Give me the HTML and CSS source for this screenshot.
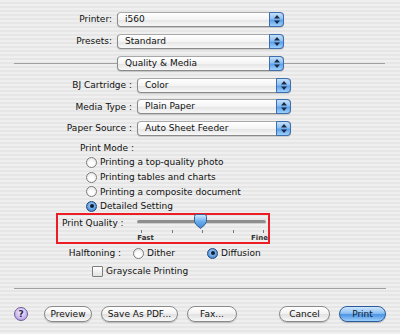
FILE: index.html
```html
<!DOCTYPE html>
<html lang="en">
<head>
    <meta charset="UTF-8">
    <title>Print</title>
    <link rel="stylesheet" href="styles.css">
</head>
<body>
    <div class="dialog">
        <div class="row top">
            <span class="label">Printer:</span>
            <div class="popup wide">i560<span class="cap"><svg width="6" height="9" viewBox="0 0 6 9"><path d="M3 0L6 3.5H0Z M3 9L6 5.5H0Z" fill="#1b2a45"/></svg></span></div>
        </div>
        <div class="row top">
            <span class="label">Presets:</span>
            <div class="popup wide">Standard<span class="cap"><svg width="6" height="9" viewBox="0 0 6 9"><path d="M3 0L6 3.5H0Z M3 9L6 5.5H0Z" fill="#1b2a45"/></svg></span></div>
        </div>
        <div class="row pane">
            <span class="rule left"></span>
            <div class="popup wide">Quality &amp; Media<span class="cap"><svg width="6" height="9" viewBox="0 0 6 9"><path d="M3 0L6 3.5H0Z M3 9L6 5.5H0Z" fill="#1b2a45"/></svg></span></div>
            <span class="rule right"></span>
        </div>

        <div class="row mid first">
            <span class="label">BJ Cartridge :</span>
            <div class="popup">Color<span class="cap"><svg width="6" height="9" viewBox="0 0 6 9"><path d="M3 0L6 3.5H0Z M3 9L6 5.5H0Z" fill="#1b2a45"/></svg></span></div>
        </div>
        <div class="row mid">
            <span class="label">Media Type :</span>
            <div class="popup">Plain Paper<span class="cap"><svg width="6" height="9" viewBox="0 0 6 9"><path d="M3 0L6 3.5H0Z M3 9L6 5.5H0Z" fill="#1b2a45"/></svg></span></div>
        </div>
        <div class="row mid">
            <span class="label">Paper Source :</span>
            <div class="popup">Auto Sheet Feeder<span class="cap"><svg width="6" height="9" viewBox="0 0 6 9"><path d="M3 0L6 3.5H0Z M3 9L6 5.5H0Z" fill="#1b2a45"/></svg></span></div>
        </div>

        <div class="mode">
            <div class="mode-title">Print Mode :</div>
            <div class="radios">
                <div class="option"><span class="radio"></span>Printing a top-quality photo</div>
                <div class="option"><span class="radio"></span>Printing tables and charts</div>
                <div class="option"><span class="radio"></span>Printing a composite document</div>
                <div class="option"><span class="radio on"></span>Detailed Setting</div>
            </div>
        </div>

        <div class="quality">
            <span class="q-label">Print Quality :</span>
            <div class="slider">
                <div class="track"></div>
                <svg class="thumb" width="13" height="15" viewBox="0 0 13 15">
                    <defs>
                        <linearGradient id="tg" x1="0" y1="0" x2="0" y2="1">
                            <stop offset="0" stop-color="#d6ecff"/>
                            <stop offset="0.5" stop-color="#6aaef0"/>
                            <stop offset="1" stop-color="#3d86d8"/>
                        </linearGradient>
                    </defs>
                    <path d="M2.5 0.5H10.5Q12.5 0.5 12.5 2.5V7.5Q12.5 10 6.5 14.5Q0.5 10 0.5 7.5V2.5Q0.5 0.5 2.5 0.5Z" fill="url(#tg)" stroke="#3a5f8f"/>
                </svg>
                <div class="ticks">
                    <span></span><span></span><span></span><span></span><span></span>
                </div>
                <div class="ends"><span>Fast</span><span>Fine</span></div>
            </div>
        </div>

        <div class="halftone">
            <span class="h-label">Halftoning :</span>
            <div class="option"><span class="radio"></span>Dither</div>
            <div class="option diffusion"><span class="radio on"></span>Diffusion</div>
        </div>
        <div class="gray">
            <span class="check"></span>Grayscale Printing
        </div>

        <div class="bottom-rule"></div>

        <div class="buttons">
            <span class="help">?</span>
            <span class="btn preview">Preview</span>
            <span class="btn pdf">Save As PDF...</span>
            <span class="btn fax">Fax...</span>
            <span class="spacer"></span>
            <span class="btn cancel">Cancel</span>
            <span class="btn print">Print</span>
        </div>
    </div>
</body>
</html>
```

FILE: styles.css
```css
body {
    margin: 0;
    width: 400px;
    height: 334px;
    overflow: hidden;
    font-family: "DejaVu Sans", Verdana, sans-serif;
    font-size: 9px;
    color: #111;
    background-color: #ececec;
    background-image: repeating-linear-gradient(to bottom, #efefef 0, #efefef 2px, #e6e6e6 2px, #e6e6e6 4px);
}
.dialog {
    padding-top: 8px;
}
.row {
    display: flex;
    align-items: center;
    height: 22px;
}
.row.mid {
    height: 21.5px;
}
.label {
    text-align: right;
    padding-right: 5px;
    box-sizing: border-box;
}
.top .label {
    width: 117px;
}
.mid .label {
    width: 137px;
}
.mid.first {
    margin-top: 0.5px;
}
.popup {
    position: relative;
    box-sizing: border-box;
    width: 154px;
    height: 15px;
    line-height: 13px;
    padding-left: 7px;
    border: 1px solid #8a8a8a;
    border-top-color: #a8a8a8;
    border-radius: 4px;
    background: linear-gradient(to bottom, #ffffff 0%, #f4f4f4 50%, #e4e4e4 51%, #f8f8f8 100%);
    box-shadow: 0 1px 1px rgba(0,0,0,0.15);
}
.popup.wide {
    width: 167px;
}
.cap {
    position: absolute;
    right: -1px;
    top: -1px;
    width: 15px;
    height: 15px;
    border: 1px solid #3d6fae;
    border-radius: 0 4px 4px 0;
    box-sizing: border-box;
    background: linear-gradient(to bottom, #c5e0fb 0%, #8dc0f2 45%, #5ba0ea 55%, #9fd0fb 100%);
    display: flex;
    align-items: center;
    justify-content: center;
}
.rule {
    height: 1px;
    background: #a0a0a0;
}
.rule.left {
    margin-left: 14px;
    width: 103px;
}
.rule.right {
    width: 101px;
}
.mode {
    padding-left: 80px;
    margin-top: 2px;
}
.mode-title {
    height: 14px;
    line-height: 14px;
}
.radios {
    padding-left: 6px;
}
.option {
    display: flex;
    align-items: center;
    height: 14.7px;
}
.radio {
    width: 9px;
    height: 9px;
    border: 1px solid #7d7d7d;
    border-radius: 50%;
    margin-right: 3px;
    background: radial-gradient(circle at 50% 65%, #ffffff 30%, #dcdcdc 100%);
    position: relative;
}
.radio.on {
    border-color: #24487a;
    background: radial-gradient(circle at 50% 40%, #b8daf8 0%, #5b9be0 60%, #2e6fc0 100%);
}
.radio.on::after {
    content: "";
    position: absolute;
    left: 2.5px;
    top: 2.5px;
    width: 4px;
    height: 4px;
    border-radius: 50%;
    background: #0d1d33;
}
.quality {
    display: flex;
    margin: -1px 0 0 56px;
    width: 214px;
    height: 31px;
    box-sizing: border-box;
    border: 2px solid #ec1c24;
}
.q-label {
    padding: 3px 0 0 4px;
    width: 76px;
}
.slider {
    position: relative;
    width: 132px;
}
.track {
    position: absolute;
    left: 0;
    right: 2px;
    top: 5px;
    height: 3px;
    border-radius: 2px;
    background: #8e8e8e;
    border-bottom: 1px solid #cfcfcf;
}
.thumb {
    position: absolute;
    left: 57px;
    top: -1px;
}
.ticks {
    position: absolute;
    left: 4px;
    right: 4px;
    top: 15px;
    display: flex;
    justify-content: space-between;
}
.ticks span {
    width: 1px;
    height: 3px;
    background: #777;
}
.ends {
    position: absolute;
    left: 0;
    right: 0;
    top: 19px;
    display: flex;
    justify-content: space-between;
    font-size: 7px;
    font-weight: bold;
    color: #333;
}
.halftone {
    display: flex;
    align-items: center;
    height: 19px;
}
.h-label {
    width: 133px;
    padding-right: 12px;
    box-sizing: border-box;
    text-align: right;
}
.halftone .option {
    width: 74px;
}
.gray {
    display: flex;
    align-items: center;
    height: 17px;
    padding-left: 92px;
}
.check {
    width: 9px;
    height: 9px;
    border: 1px solid #7d7d7d;
    border-radius: 1px;
    margin-right: 3px;
    background: linear-gradient(to bottom, #ffffff, #e2e2e2);
}
.bottom-rule {
    margin: 8px 14px 0 14px;
    height: 1px;
    background: #a0a0a0;
}
.buttons {
    display: flex;
    align-items: center;
    padding: 17px 14px 0 14px;
}
.help {
    width: 14px;
    height: 14px;
    box-sizing: border-box;
    border-radius: 50%;
    border: 1px solid #6b5c97;
    background: radial-gradient(circle at 50% 35%, #f2ecff 0%, #c9b8ef 60%, #9d86d6 100%);
    font-weight: bold;
    font-size: 9px;
    line-height: 12px;
    text-align: center;
    color: #2a1f4d;
}
.btn {
    box-sizing: border-box;
    height: 16px;
    line-height: 14px;
    text-align: center;
    border: 1px solid #8a8a8a;
    border-radius: 8px;
    background: linear-gradient(to bottom, #ffffff 0%, #f1f1f1 50%, #e0e0e0 51%, #f8f8f8 100%);
    box-shadow: 0 1px 1px rgba(0,0,0,0.2);
}
.preview {
    width: 48px;
    margin-left: 16px;
}
.pdf {
    width: 77px;
    margin-left: 9px;
}
.fax {
    width: 50px;
    margin-left: 9px;
}
.spacer {
    flex: 1;
}
.cancel {
    width: 51px;
}
.print {
    width: 47px;
    margin-left: 9px;
    border-color: #2a5a9a;
    color: #0c1c36;
    background: linear-gradient(to bottom, #cfe6fd 0%, #8cc0f2 45%, #4c93e3 55%, #9ed0fb 100%);
}
```
